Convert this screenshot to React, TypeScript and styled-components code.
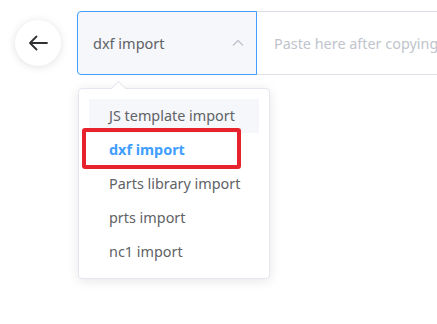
import styled, { createGlobalStyle } from "styled-components";

const Global = createGlobalStyle`
  html, body {
    margin: 0;
    padding: 0;
    background: #ffffff;
    font-family: "Noto Sans", "Liberation Sans", sans-serif;
  }
`;

const Page = styled.div`
  width: 437px;
  height: 324px;
  overflow: hidden;
  background: #ffffff;
`;

const Toolbar = styled.div`
  display: flex;
  align-items: center;
  gap: 16px;
  padding: 11px 0 0 15px;
`;

const BackButton = styled.button`
  width: 46px;
  height: 46px;
  border: none;
  border-radius: 50%;
  background: #ffffff;
  box-shadow: 0 1px 8px rgba(0, 0, 0, 0.12);
  display: flex;
  align-items: center;
  justify-content: center;
  padding: 0;
  flex: none;
`;

const Field = styled.div`
  display: flex;
  position: relative;
`;

const SelectBox = styled.div`
  box-sizing: border-box;
  width: 180px;
  height: 64px;
  background: #f5f7fa;
  border: 1px solid #409eff;
  border-radius: 4px 0 0 4px;
  display: flex;
  align-items: center;
  justify-content: space-between;
  padding: 0 12px 0 15px;
  font-size: 14.5px;
  color: #606266;
  position: relative;
  z-index: 1;
`;

const InputBox = styled.div`
  box-sizing: border-box;
  width: 260px;
  height: 64px;
  margin-left: -1px;
  border: 1px solid #dcdfe6;
  background: #ffffff;
  display: flex;
  align-items: center;
  padding-left: 17px;
  font-size: 14.4px;
  color: #c0c4cc;
  white-space: nowrap;
`;

const Menu = styled.div`
  position: absolute;
  top: 77px;
  left: 1px;
  width: 192px;
  box-sizing: border-box;
  padding: 10px 10px 9px;
  background: #ffffff;
  border: 1px solid #e4e7ed;
  border-radius: 4px;
  box-shadow: 0 2px 12px rgba(0, 0, 0, 0.1);

  &::before {
    content: "";
    position: absolute;
    top: -6px;
    left: 34px;
    width: 10px;
    height: 10px;
    background: #ffffff;
    border-top: 1px solid #e4e7ed;
    border-left: 1px solid #e4e7ed;
    transform: rotate(45deg);
  }
`;

const Item = styled.div<{ $hover?: boolean; $selected?: boolean }>`
  position: relative;
  height: 34px;
  line-height: 34px;
  padding-left: 20px;
  font-size: 14.4px;
  white-space: nowrap;
  color: ${(p) => (p.$selected ? "#409eff" : "#606266")};
  font-weight: ${(p) => (p.$selected ? 700 : 400)};
  background: ${(p) => (p.$hover ? "#f5f7fa" : "transparent")};
`;

const Highlight = styled.span`
  position: absolute;
  left: -7px;
  top: -5px;
  width: 159px;
  height: 41px;
  box-sizing: border-box;
  border: 4px solid #e8222d;
  border-radius: 3px;
  pointer-events: none;
`;

const options = [
  "JS template import",
  "dxf import",
  "Parts library import",
  "prts import",
  "nc1 import",
];

export default function App() {
  const selected = "dxf import";
  return (
    <Page>
      <Global />
      <Toolbar>
        <BackButton aria-label="back">
          <svg width="20" height="16" viewBox="0 0 20 16" fill="none">
            <path
              d="M19 8H2M8.5 1.5L2 8l6.5 6.5"
              stroke="#303133"
              strokeWidth="1.8"
              strokeLinecap="round"
              strokeLinejoin="round"
            />
          </svg>
        </BackButton>
        <Field>
          <SelectBox>
            <span>{selected}</span>
            <svg width="12" height="8" viewBox="0 0 12 8" fill="none">
              <path d="M1 6.5L6 1.5l5 5" stroke="#c0c4cc" strokeWidth="1.3" />
            </svg>
          </SelectBox>
          <InputBox>Paste here after copying</InputBox>
          <Menu>
            {options.map((o, i) => (
              <Item key={o} $hover={i === 0} $selected={o === selected}>
                {o}
                {o === selected && <Highlight />}
              </Item>
            ))}
          </Menu>
        </Field>
      </Toolbar>
    </Page>
  );
}
